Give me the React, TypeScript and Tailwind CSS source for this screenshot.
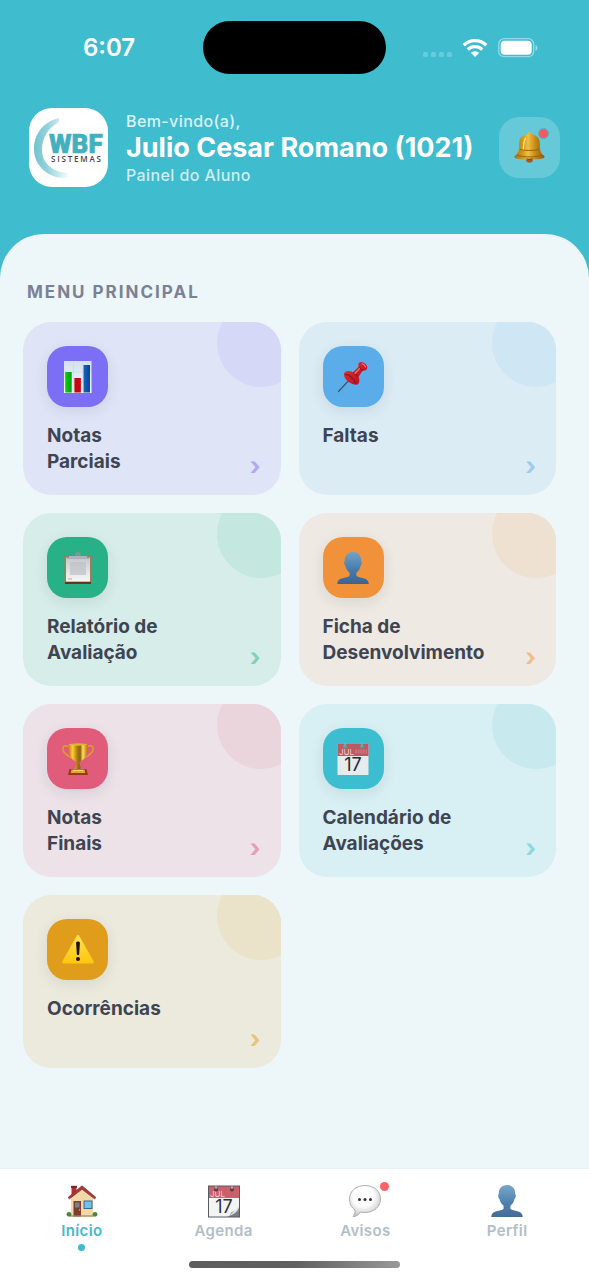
import type { ReactNode } from 'react';

function ChartIcon() {
  return (
    <svg viewBox="0 0 32 32" className="size-8" aria-hidden="true">
      <defs>
        <linearGradient id="chartPaper" x1="0" y1="0" x2="0" y2="1">
          <stop offset="0" stopColor="#d3dff0" />
          <stop offset="1" stopColor="#f6f8fb" />
        </linearGradient>
        <linearGradient id="chartGreen" x1="0" y1="0" x2="1" y2="0">
          <stop offset="0" stopColor="#00d20b" />
          <stop offset="1" stopColor="#079c17" />
        </linearGradient>
        <linearGradient id="chartBlue" x1="0" y1="0" x2="1" y2="0">
          <stop offset="0" stopColor="#1267bd" />
          <stop offset="1" stopColor="#064497" />
        </linearGradient>
      </defs>
      <rect x="2" y="0" width="27.5" height="32" fill="url(#chartPaper)" />
      <path d="M11.500 1v30M20.500 1v30M3 11h26M3 21h26" stroke="#c8d3e3" strokeWidth="0.5" />
      <rect x="3.200" y="11" width="6.5" height="20.5" fill="url(#chartGreen)" />
      <rect x="12.400" y="17" width="6.5" height="14.5" fill="#c40710" />
      <rect x="21.500" y="4" width="6.5" height="27.5" fill="url(#chartBlue)" />
    </svg>
  );
}

function PinIcon() {
  return (
    <svg viewBox="0 0 32 32" className="size-8" aria-hidden="true">
      <defs>
        <linearGradient id="pinRed" x1="0" y1="0" x2="1" y2="1">
          <stop offset="0" stopColor="#e8454c" />
          <stop offset="0.5" stopColor="#cf1c2a" />
          <stop offset="1" stopColor="#a81522" />
        </linearGradient>
      </defs>
      <path d="M1.500 30.500 14 17" stroke="#42536e" strokeWidth="1.200" strokeLinecap="round" />
      <path d="M7 12.500c1-2.600 5.400-3.200 9-1.300l5.500-5.500C20.700 2.800 22.200.8 24.500 1c3 .3 5.800 3 5.800 5.500 0 2.400-1.900 3.400-4.500 3l-4.200 6.300c1.400 3.400.9 7.700-2 8C14.500 24.200 5.500 17.500 7 12.500Z" fill="url(#pinRed)" />
      <path d="M8 14c3-1.500 9.500 3.500 10.500 8.500M16.500 11.500l4.500 4M22.500 6.500c1 1.700 2.300 2.600 4 2.800" fill="none" stroke="#8e1722" strokeWidth="1.200" />
      <path d="m18 12.500 4.500-4.800M25 2.800c1.800.4 3 1.700 3.600 3.200" stroke="#fb7478" strokeWidth="1.100" fill="none" strokeLinecap="round" />
    </svg>
  );
}

function ClipboardIcon() {
  return (
    <svg viewBox="0 0 32 32" className="size-8" aria-hidden="true">
      <defs>
        <linearGradient id="clipPaper" x1="0" y1="0" x2="0" y2="1">
          <stop offset="0" stopColor="#c5c8cb" />
          <stop offset="1" stopColor="#f8f8f8" />
        </linearGradient>
      </defs>
      <rect x="2.500" y="3" width="27" height="29" rx="1.200" fill="#a8794e" />
      <path d="M3 30h26v2H3z" fill="#6b351c" />
      <path d="M4 5.500h24v24H4z" fill="url(#clipPaper)" />
      <path d="M8 10h16v13H8z" fill="#bcbfc3" opacity=".65" />
      <path d="M6 27h4" stroke="#c58d62" strokeWidth=".8" />
      <path d="M5 6.500c0-2.500 3-2.500 8.500-2.500V2c0-2.200 5-2.200 5 0v2C24 4 27 4 27 6.500Z" fill="#8d9798" />
      <path d="M7 5h18" stroke="#cbd5d5" strokeWidth="1" />
      <circle cx="16" cy="2.500" r="1" fill="#40a68b" />
    </svg>
  );
}

function PersonIcon() {
  return (
    <svg viewBox="0 0 32 32" className="size-8" aria-hidden="true">
      <defs>
        <linearGradient id="personBlue" x1="0" y1="0" x2="0" y2="1">
          <stop offset="0" stopColor="#73a3c9" />
          <stop offset="0.55" stopColor="#467bab" />
          <stop offset="1" stopColor="#3c6391" />
        </linearGradient>
      </defs>
      <path d="M16 0c5.600 0 8.400 4.100 8.200 9 .9.200.9 3.700-.7 5-.5 3.200-2.200 5.400-4.100 6.700v3c1.300 2.200 10.700 1.500 12 6.200.2.800.3 1.400.3 2.100H.3c0-.7.100-1.300.3-2.100 1.300-4.700 10.700-4 12-6.200v-3C10.700 19.400 9 17.200 8.500 14 6.900 12.700 6.900 9.200 7.800 9 7.600 4.100 10.400 0 16 0Z" fill="url(#personBlue)" />
    </svg>
  );
}

function TrophyIcon() {
  return (
    <svg viewBox="0 0 32 32" className="size-8" aria-hidden="true">
      <defs>
        <linearGradient id="trophyGold" x1="0" y1="0" x2="1" y2="0">
          <stop offset="0" stopColor="#c88005" />
          <stop offset="0.22" stopColor="#f8cf38" />
          <stop offset="0.48" stopColor="#a9730c" />
          <stop offset="0.62" stopColor="#8d6413" />
          <stop offset="0.76" stopColor="#ffe05c" />
          <stop offset="1" stopColor="#b96e05" />
        </linearGradient>
      </defs>
      <path d="M8 4.500C4.500 1.500.8 2.500.8 6c0 4.200 5.200 7 11.200 10.500M24 4.500c3.500-3 7.200-2 7.200 1.500 0 4.200-5.200 7-11.200 10.500" fill="none" stroke="#dd9d2c" strokeWidth="1.500" />
      <path d="M6.500 1.500c0 9.400 2.600 15.800 8 17.300-.1 3.300-.8 5.200-2.500 7.700h8c-1.700-2.500-2.400-4.400-2.500-7.700 5.400-1.500 8-7.900 8-17.300Z" fill="url(#trophyGold)" />
      <ellipse cx="16" cy="1.500" rx="9.500" ry="1.200" fill="#e3b23b" />
      <path d="M7.500 26h17l1.500 6H6Z" fill="#963b18" />
      <path d="M9.500 26.500h13l.7 3.500H8.800Z" fill="#e5a62e" />
      <path d="M11 27.500h10" stroke="#ffdf70" />
    </svg>
  );
}

function CalendarIcon({ tearOff = false }: { tearOff?: boolean }) {
  return (
    <svg viewBox="0 0 32 32" className="size-8 overflow-visible" aria-hidden="true">
      <rect x="0.500" y="1" width="31" height="31" fill={tearOff ? '#f4f4f4' : '#e9eaec'} />
      <path d="M.5 1h31v12H.5z" fill={tearOff ? '#c95764' : '#bd5962'} />
      <text x="2" y="11.500" fontSize="8" fill="#f3cccf" fontFamily="Inter, sans-serif">JUL</text>
      <text x="16" y="28" textAnchor="middle" fontSize="18" fontWeight="400" fill="#252a2e" fontFamily="Inter, sans-serif">17</text>
      {tearOff ? (
        <>
          <path d="M19 32c4-1 3-4 5-5 2-1 5-1 7.500-6v11Z" fill="#74777a" />
          <path d="M20 31c4-1 5-6 11-9-1 5-6 8-11 9Z" fill="#e3e3e3" />
          <rect x="0.500" y="1" width="31" height="31" fill="none" stroke="#4e5358" />
          <circle cx="8" cy="4.500" r="2" fill="#513139" />
          <circle cx="24" cy="4.500" r="2" fill="#513139" />
          <path d="M8 0v4M24 0v4" stroke="#a5acae" strokeWidth="1.500" />
        </>
      ) : (
        <>
          <path d="M18 8.500h12" stroke="#c97179" strokeWidth="4" strokeDasharray="2 .6" />
          <circle cx="8" cy="3.500" r="2" fill="#4aa69e" />
          <circle cx="25" cy="3.500" r="2" fill="#4aa69e" />
          <path d="M8 0v3M25 0v3" stroke="#69c8ce" />
        </>
      )}
    </svg>
  );
}

function WarningIcon() {
  return (
    <svg viewBox="0 0 32 32" className="size-8" aria-hidden="true">
      <defs>
        <linearGradient id="warningYellow" x1="0" y1="0" x2="0" y2="1">
          <stop offset="0" stopColor="#ffe052" />
          <stop offset="1" stopColor="#ffc60b" />
        </linearGradient>
      </defs>
      <path d="M14.800 1.700c.6-1 1.800-1 2.400 0L31.700 27.500c.6 1.100 0 2-1.200 2h-29C.3 29.500-.3 28.600.3 27.500Z" fill="url(#warningYellow)" />
      <path d="M14.100 9c0-2 3.800-2 3.800 0l-.7 11c-.1 1.500-2.300 1.500-2.400 0Z" fill="#171204" />
      <circle cx="16" cy="25" r="2" fill="#171204" />
    </svg>
  );
}

function BellIcon() {
  return (
    <svg viewBox="0 0 32 32" className="size-[31px]" aria-hidden="true">
      <defs>
        <linearGradient id="bellGold" x1="0" y1="0" x2="1" y2="0">
          <stop offset="0" stopColor="#a96b09" />
          <stop offset="0.28" stopColor="#d39b1c" />
          <stop offset="0.45" stopColor="#eec043" />
          <stop offset="0.7" stopColor="#c68916" />
          <stop offset="1" stopColor="#8b5708" />
        </linearGradient>
      </defs>
      <circle cx="16" cy="28" r="3.600" fill="#a45b22" />
      <path d="M16 0c1.500 0 2 1.100 1.900 2.300 5.600.9 8.800 4.300 8.800 9.700 0 6.500.3 9.800 4.300 12.500 1 .8.700 2-1 2.500-8.400 2-19.600 2-28 0-1.700-.5-2-1.700-1-2.500 4-2.700 4.300-6 4.300-12.500 0-5.400 3.200-8.800 8.800-9.700C14 1.100 14.500 0 16 0Z" fill="url(#bellGold)" />
      <path d="M3 24c7 2.300 19 2.300 26 0M6.500 18c5 1.500 14 1.500 19 0" fill="none" stroke="#946210" strokeWidth="1" />
      <path d="M12 6c-2 3-2 7-2.500 12" stroke="#ffe37a" strokeWidth="1.300" fill="none" />
      <path d="M13 27.500c1 1 5 1 6 0" stroke="#613416" fill="none" />
    </svg>
  );
}

function HouseIcon() {
  return (
    <svg viewBox="0 0 32 32" className="size-8" aria-hidden="true">
      <path d="M5.500 1.500h5v11h-5z" fill="#b32e32" />
      <path d="M5 .8h6v2H5z" fill="#79242a" />
      <path d="M5 13 16 3l11 10v18.500H5Z" fill="#f2d8a7" />
      <path d="M2 12.500 16 .8l14 11.700-1.500 1.300L16 4.200 3.500 13.800Z" fill="#b2363a" stroke="#7c2d2f" strokeWidth=".7" />
      <path d="M7.500 16h7.500v15.500H7.500z" fill="#7e3d2f" />
      <path d="M9 17.500h4.500v5H9z" fill="#738296" />
      <path d="M17.500 15.500h9v8.500h-9z" fill="#3a6990" />
      <path d="M18.500 16.500h7v6.500h-7z" fill="#72c0ec" />
      <path d="M4 31h24" stroke="#a68058" strokeWidth="1.200" />
      <circle cx="3" cy="29.300" r="2.400" fill="#49873a" />
      <circle cx="29" cy="29.300" r="2.400" fill="#49873a" />
      <circle cx="13.500" cy="25" r=".7" fill="#e9bb57" />
    </svg>
  );
}

function ChatIcon() {
  return (
    <svg viewBox="0 0 32 32" className="size-8" aria-hidden="true">
      <defs>
        <radialGradient id="chatFill" cx=".45" cy=".35" r=".65">
          <stop offset=".5" stopColor="#fff" />
          <stop offset="1" stopColor="#c4c4c6" />
        </radialGradient>
      </defs>
      <path d="M16 .5c9.500 0 15.500 6 15.500 13.500S25 27.500 16 27.500c-1.600 0-3.100-.2-4.500-.5C9.500 30 7 31.500 4 31.700c1.500-1.700 2.300-4 2-6.700C2.600 22.600.5 18.900.5 14 .5 6.500 6.500.5 16 .5Z" fill="url(#chatFill)" stroke="#ababad" />
      <circle cx="10.500" cy="14.500" r="1.500" fill="#252729" />
      <circle cx="16" cy="14.500" r="1.500" fill="#252729" />
      <circle cx="21.500" cy="14.500" r="1.500" fill="#252729" />
    </svg>
  );
}

function Logo() {
  return (
    <svg viewBox="0 0 79 79" className="size-[79px] shrink-0" role="img" aria-label="WBF Sistemas">
      <defs>
        <linearGradient id="logoArc" gradientUnits="userSpaceOnUse" x1="5" y1="40" x2="42" y2="40">
          <stop offset="0" stopColor="#6fc3cf" />
          <stop offset=".4" stopColor="#9ad5dc" />
          <stop offset=".95" stopColor="#fff" />
        </linearGradient>
      </defs>
      <rect width="79" height="79" rx="23" fill="#fff" />
      <path d="M30 10C14 14 5 26 5 41c0 18 16 31 36 29v-5C25 65 13 56 13 42c0-12 6-22 17-28Z" fill="url(#logoArc)" />
      <text x="20" y="45" fontFamily="Roboto, sans-serif" fontSize="26" fontWeight="900" fill="#42b0bf" stroke="#42b0bf" strokeWidth=".6">WBF</text>
      <text x="22" y="54" fontFamily="'Open Sans', sans-serif" fontSize="8" fontWeight="600" letterSpacing="1.800" fill="#4b4345">SISTEMAS</text>
    </svg>
  );
}

function StatusBar() {
  return (
    <div className="grid grid-cols-[1fr_auto_1fr] items-center pt-[21px]">
      <div className="pl-[83px] text-[24px] leading-[30px] font-semibold">6:07</div>
      <div className="h-[53px] w-[183px] rounded-full bg-black" />
      <div className="flex items-center justify-end gap-[10px] pr-[51px]">
        <svg viewBox="0 0 29 20" className="h-5 w-[29px]" fill="#fff" fillOpacity=".22" aria-hidden="true">
          <rect x="0" y="14" width="5" height="5" rx="1.500" />
          <rect x="8" y="14" width="5" height="5" rx="1.500" />
          <rect x="16" y="14" width="5" height="5" rx="1.500" />
          <rect x="24" y="14" width="5" height="5" rx="1.500" />
        </svg>
        <svg viewBox="0 0 26 20" className="h-5 w-[26px]" fill="none" stroke="#fff" aria-hidden="true">
          <path d="M1.800 7.200a16 16 0 0 1 22.400 0M5.700 11.500a10.500 10.500 0 0 1 14.600 0" strokeWidth="3.300" />
          <path d="M8.800 14.800a6.200 6.200 0 0 1 8.400 0L13 19Z" fill="#fff" stroke="none" />
        </svg>
        <svg viewBox="0 0 40 20" className="h-5 w-10" aria-hidden="true">
          <rect x=".7" y=".7" width="35" height="18" rx="5.500" fill="none" stroke="#fff" strokeOpacity=".45" strokeWidth="1.300" />
          <rect x="2.700" y="2.700" width="31" height="14" rx="4" fill="#fff" />
          <path d="M37.500 7c2.500.8 2.500 5 0 5.800Z" fill="#fff" fillOpacity=".5" />
        </svg>
      </div>
    </div>
  );
}

type MenuItem = {
  lines: string[];
  icon: ReactNode;
  card: string;
  tile: string;
  circle: string;
  arrow: string;
};

const menu: MenuItem[] = [
  { lines: ['Notas', 'Parciais'], icon: <ChartIcon />, card: 'bg-[#dfe5f7]', tile: 'bg-[#7d6ff5]', circle: 'bg-[#d5d9f7]', arrow: 'text-[#afa8f4]' },
  { lines: ['Faltas'], icon: <PinIcon />, card: 'bg-[#dcecf5]', tile: 'bg-[#5aade8]', circle: 'bg-[#cfe6f5]', arrow: 'text-[#9ccdef]' },
  { lines: ['Relatório de', 'Avaliação'], icon: <ClipboardIcon />, card: 'bg-[#d6ede9]', tile: 'bg-[#28b086]', circle: 'bg-[#c4e8df]', arrow: 'text-[#82d0ba]' },
  { lines: ['Ficha de', 'Desenvolvimento'], icon: <PersonIcon />, card: 'bg-[#eee9e2]', tile: 'bg-[#f1923a]', circle: 'bg-[#eee1d1]', arrow: 'text-[#f0bd8f]' },
  { lines: ['Notas', 'Finais'], icon: <TrophyIcon />, card: 'bg-[#ece2e8]', tile: 'bg-[#e15b7a]', circle: 'bg-[#ebd5dd]', arrow: 'text-[#e79eb2]' },
  { lines: ['Calendário de', 'Avaliações'], icon: <CalendarIcon />, card: 'bg-[#d8eff3]', tile: 'bg-[#3dbdd0]', circle: 'bg-[#c8eaee]', arrow: 'text-[#8dd8e2]' },
  { lines: ['Ocorrências'], icon: <WarningIcon />, card: 'bg-[#eceadd]', tile: 'bg-[#e09d1c]', circle: 'bg-[#eae3c9]', arrow: 'text-[#e8c27b]' },
];

function MenuCard({ lines, icon, card, tile, circle, arrow }: MenuItem) {
  return (
    <button type="button" className={`relative flex min-h-[173px] flex-col items-start overflow-hidden rounded-[28px] px-6 pt-6 pb-[18px] text-left ${card}`}>
      <span className={`absolute -top-[23px] -right-6 size-[88px] rounded-full ${circle}`} />
      <span className={`flex size-[61px] items-center justify-center rounded-[20px] shadow-[0_4px_14px_rgba(30,50,60,0.10)] ${tile}`}>{icon}</span>
      <span className="mt-4 text-[19px] leading-[26px] font-bold text-[#3e4452]">
        {lines.map((line) => (
          <span key={line} className="block">{line}</span>
        ))}
      </span>
      <span aria-hidden="true" className={`absolute right-5 bottom-[14px] text-[25px] leading-[30px] font-bold ${arrow}`}>›</span>
    </button>
  );
}

const tabs = [
  { label: 'Início', icon: <HouseIcon />, active: true, alert: false },
  { label: 'Agenda', icon: <CalendarIcon tearOff />, active: false, alert: false },
  { label: 'Avisos', icon: <ChatIcon />, active: false, alert: true },
  { label: 'Perfil', icon: <PersonIcon />, active: false, alert: false },
];

export default function App() {
  return (
    <div className="flex min-h-screen flex-col bg-[#3fbcce] font-[Inter,sans-serif] text-white">
      <StatusBar />
      <header className="flex items-center pt-[34px] pr-[29px] pb-[47px] pl-[29px]">
        <Logo />
        <div className="ml-[18px] min-w-0 flex-1">
          <p className="text-[16px] leading-[22px] font-medium tracking-wide text-white/80">Bem-vindo(a),</p>
          <h1 className="text-[27px] leading-[32px] font-bold whitespace-nowrap">Julio Cesar Romano (1021)</h1>
          <p className="text-[16px] leading-[22px] font-medium tracking-wide text-white/75">Painel do Aluno</p>
        </div>
        <button type="button" aria-label="Notificações" className="relative flex size-[61px] shrink-0 items-center justify-center rounded-[20px] bg-white/20">
          <BellIcon />
          <span className="absolute top-[11px] right-[11px] size-[11px] rounded-full border border-[#3dbbce] bg-[#f65b60]" />
        </button>
      </header>

      <main className="flex-1 rounded-t-[44px] bg-[#edf6f9] pt-12 pr-[33px] pb-12 pl-[23px]">
        <h2 className="pl-1 text-[17px] leading-5 font-bold tracking-[2px] text-[#7a8194]">MENU PRINCIPAL</h2>
        <div className="mt-5 grid grid-cols-2 gap-[18px]">
          {menu.map((item) => (
            <MenuCard key={item.lines.join(' ')} {...item} />
          ))}
        </div>
      </main>

      <nav className="border-t border-[#e9f0f3] bg-white px-[11px] pt-4 pb-3">
        <div className="grid grid-cols-4">
          {tabs.map(({ label, icon, active, alert }) => (
            <a key={label} href="#" aria-current={active ? 'page' : undefined} className="flex flex-col items-center">
              <span className={`relative ${active ? '' : 'opacity-95'}`}>
                {icon}
                {alert && <span className="absolute -top-[3px] -right-2 size-[9px] rounded-full bg-[#fa5c61]" />}
              </span>
              <span className={`mt-1 text-[15px] leading-5 font-semibold tracking-wide ${active ? 'text-[#3dbbce]' : 'text-[#b2bec7]'}`}>{label}</span>
              <span className={`mt-[3px] size-[7px] rounded-full ${active ? 'bg-[#3dbbce]' : 'bg-transparent'}`} />
            </a>
          ))}
        </div>
        <div className="mx-auto mt-[10px] h-[7px] w-[211px] rounded-full bg-linear-to-r from-[#5c5c5c] via-[#606060] to-[#999]" />
      </nav>
    </div>
  );
}
